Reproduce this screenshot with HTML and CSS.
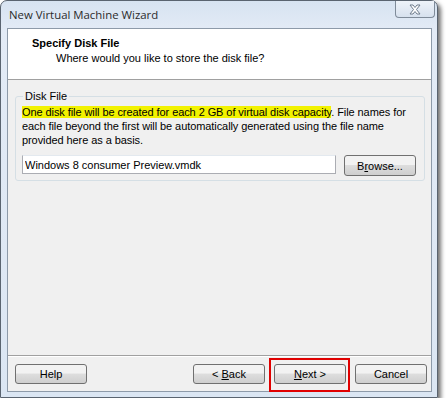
FILE: index.html
```html
<!DOCTYPE html>
<html lang="en">
<head>
  <meta charset="UTF-8">
  <title>New Virtual Machine Wizard</title>
  <link rel="stylesheet" href="styles.css">
</head>
<body>
  <div class="window">
    <!-- Title bar -->
    <div class="titlebar">
      <span class="title">New Virtual Machine Wizard</span>
      <div class="close-btn">
        <svg width="16" height="11" viewBox="0 0 16 11">
          <path d="M3 1 L6 1 L8 3.5 L10 1 L13 1 L9.5 5.5 L13 10 L10 10 L8 7.5 L6 10 L3 10 L6.5 5.5 Z"
                fill="#fff" stroke="#6f7c8c" stroke-width="1" stroke-linejoin="round"/>
        </svg>
      </div>
    </div>

    <div class="client">
      <!-- Wizard page header -->
      <div class="page-header">
        <div class="page-title">Specify Disk File</div>
        <div class="page-subtitle">Where would you like to store the disk file?</div>
      </div>

      <div class="page-body">
        <fieldset class="group">
          <legend>Disk File</legend>
          <p class="info"><span class="mark">One disk file will be created for each 2 GB of virtual disk capacity</span>. File names for each file beyond the first will be automatically generated using the file name provided here as a basis.</p>
          <div class="file-row">
            <input class="file-input" type="text" value="Windows 8 consumer Preview.vmdk">
            <button class="btn browse">B<u>r</u>owse...</button>
          </div>
        </fieldset>
      </div>

      <!-- Navigation buttons -->
      <div class="footer">
        <button class="btn">Help</button>
        <div class="nav">
          <button class="btn">&lt; <u>B</u>ack</button>
          <button class="btn callout"><u>N</u>ext &gt;</button>
          <button class="btn">Cancel</button>
        </div>
      </div>
    </div>
  </div>
</body>
</html>
```

FILE: styles.css
```css
body {
  margin: 0;
  padding: 0;
  background: #fff;
  font-family: 'Liberation Sans', Arial, sans-serif;
  font-size: 11px;
  color: #000;
}
.window {
  position: relative;
  box-sizing: border-box;
  width: 438px;
  height: 398px;
  border: 1px solid #5a6470;
  border-radius: 7px 7px 0 0;
  background: linear-gradient(#d7e3f1, #e3ebf6 30px, #dbe6f3);
  box-shadow: 3px 3px 4px rgba(0, 0, 0, 0.55);
  padding: 0 5px 6px 6px;
}
.titlebar {
  height: 27px;
  display: flex;
  align-items: center;
  justify-content: space-between;
}
.title {
  font-family: 'Open Sans', sans-serif;
  font-size: 11.4px;
  color: #2b2b2b;
  padding-left: 2px;
}
.close-btn {
  width: 40px;
  height: 17px;
  margin-top: -10px;
  margin-right: -3px;
  box-sizing: border-box;
  border: 1px solid #7f8b99;
  border-top: none;
  border-radius: 0 0 4px 4px;
  background: linear-gradient(#eef3f9, #d7e1ee);
  display: flex;
  align-items: center;
  justify-content: center;
}
.client {
  box-sizing: border-box;
  height: 364px;
  border: 1px solid #8d9aa9;
  background: #f0f0f0;
  display: flex;
  flex-direction: column;
}
.page-header {
  background: #fff;
  height: 51px;
  border-bottom: 1px solid #a0a0a0;
  box-sizing: border-box;
  padding: 7px 0 0 24px;
}
.page-title {
  font-weight: bold;
  line-height: 14px;
}
.page-subtitle {
  margin: 1px 0 0 24px;
  line-height: 14px;
}
.page-body {
  flex: 1;
  padding: 10px 6px 0 7px;
  border-bottom: 1px solid #a0a0a0;
}
.group {
  margin: 0;
  padding: 3px 8px 4px 6px;
  border: 1px solid #d5dfe5;
  border-radius: 3px;
}
.group legend {
  padding: 0 2px;
  margin-left: 1px;
}
.info {
  margin: 0;
  line-height: 14px;
  letter-spacing: -0.08px;
}
.mark {
  background: #f2f200;
}
.file-row {
  display: flex;
  gap: 8px;
  margin-top: 8px;
}
.file-input {
  flex: 1;
  height: 19px;
  box-sizing: border-box;
  border: 1px solid #abadb3;
  border-top-color: #e3e9ef;
  padding: 0 2px;
  font: inherit;
}
.btn {
  width: 72px;
  height: 20px;
  box-sizing: border-box;
  border: 1px solid #707070;
  border-radius: 3px;
  background: linear-gradient(#f2f2f2 45%, #dddddd 50%, #cfcfcf);
  font: inherit;
  padding: 0;
}
.browse {
  width: 72px;
  height: 21px;
}
.footer {
  display: flex;
  align-items: flex-start;
  justify-content: space-between;
  padding: 7px 4px 0 7px;
  height: 35px;
  box-sizing: border-box;
  border-top: 1px solid #fff;
}
.nav {
  display: flex;
  gap: 9px;
}
.callout {
  position: relative;
}
.callout::after {
  content: "";
  position: absolute;
  top: -7px;
  bottom: -9px;
  left: -6px;
  right: -5px;
  border: 2px solid #e00000;
}
```
